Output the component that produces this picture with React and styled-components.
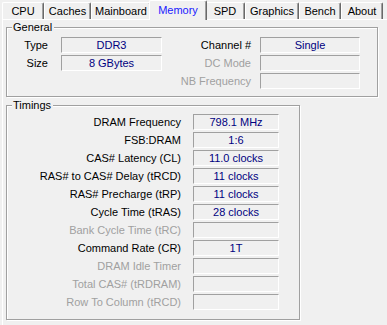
import React from "react";
import styled, { createGlobalStyle } from "styled-components";

const GlobalStyle = createGlobalStyle`
  html, body {
    margin: 0;
    padding: 0;
    background: #f0f0f0;
  }
  body {
    font-family: "Liberation Sans", Arial, sans-serif;
    font-size: 11px;
    color: #000000;
  }
`;

const Window = styled("div")`
  width: 387px;
  height: 325px;
  overflow: hidden;
  background: #f0f0f0;
`;

const TabBar = styled("div")`
  display: flex;
  align-items: flex-end;
  height: 19px;
  padding-left: 2px;
`;

const Tab = styled("div")`
  position: relative;
  box-sizing: border-box;
  width: ${(p) => (p.$active ? p.$w + 4 : p.$w)}px;
  height: ${(p) => (p.$active ? 20 : 17)}px;
  margin: ${(p) => (p.$active ? "0 -2px -1px -2px" : "0")};
  z-index: ${(p) => (p.$active ? 1 : 0)};
  display: flex;
  align-items: center;
  justify-content: center;
  padding-bottom: ${(p) => (p.$active ? 2 : 0)}px;
  background: #f0f0f0;
  border-top: 1px solid #ffffff;
  border-left: 1px solid #ffffff;
  border-right: 1px solid #696969;
  box-shadow: inset -1px 0 0 #a0a0a0;
  border-radius: 2px 2px 0 0;
  color: ${(p) => (p.$active ? "#1a1aff" : "#000000")};
  font-size: 11px;
  white-space: nowrap;
`;

const Panel = styled("div")`
  margin-left: 2px;
  width: 400px;
  height: 320px;
  box-sizing: border-box;
  border-top: 1px solid #ffffff;
  border-left: 1px solid #ffffff;
  padding: 7px 0 0 3px;
`;

const Group = styled("div")`
  position: relative;
  box-sizing: border-box;
  width: ${(p) => p.$w}px;
  border: 1px solid #a0a0a0;
  box-shadow: inset 1px 1px 0 #ffffff, 1px 1px 0 #ffffff;
  margin-bottom: 8px;
  padding: ${(p) => p.$pad};
`;

const Legend = styled("span")`
  position: absolute;
  top: -7px;
  left: 5px;
  padding: 0 2px 0 1px;
  background: #f0f0f0;
  line-height: 13px;
  color: #000000;
`;

const GeneralGrid = styled("div")`
  display: grid;
  grid-template-columns: 54px 101px 98px 100px;
  grid-auto-rows: 16px;
  row-gap: 2px;
`;

const TimingsGrid = styled("div")`
  display: grid;
  grid-template-columns: 186px 86px;
  grid-auto-rows: 16px;
  row-gap: 2px;
`;

const Label = styled("div")`
  display: flex;
  align-items: center;
  justify-content: flex-end;
  padding-right: ${(p) => p.$gap || 12}px;
  color: ${(p) => (p.$off ? "#a0a0a0" : "#000000")};
  white-space: nowrap;
`;

const Value = styled("div")`
  box-sizing: border-box;
  display: flex;
  align-items: center;
  justify-content: center;
  border-top: 1px solid #a0a0a0;
  border-left: 1px solid #a0a0a0;
  border-bottom: 1px solid #ffffff;
  border-right: 1px solid #ffffff;
  color: #000080;
  white-space: nowrap;
`;

const tabs = [
  ["CPU", 42],
  ["Caches", 47],
  ["Mainboard", 60],
  ["Memory", 54],
  ["SPD", 40],
  ["Graphics", 54],
  ["Bench", 42],
  ["About", 42],
];

const timings = [
  ["DRAM Frequency", "798.1 MHz"],
  ["FSB:DRAM", "1:6"],
  ["CAS# Latency (CL)", "11.0 clocks"],
  ["RAS# to CAS# Delay (tRCD)", "11 clocks"],
  ["RAS# Precharge (tRP)", "11 clocks"],
  ["Cycle Time (tRAS)", "28 clocks"],
  ["Bank Cycle Time (tRC)", "", true],
  ["Command Rate (CR)", "1T"],
  ["DRAM Idle Timer", "", true],
  ["Total CAS# (tRDRAM)", "", true],
  ["Row To Column (tRCD)", "", true],
];

export default function App() {
  return (
    <Window>
      <GlobalStyle />
      <TabBar>
        {tabs.map(([name, w]) => (
          <Tab key={name} $w={w} $active={name === "Memory"}>
            {name}
          </Tab>
        ))}
      </TabBar>
      <Panel>
        <Group $w={372} $pad="9px 0 7px 0">
          <Legend>General</Legend>
          <GeneralGrid>
            <Label $gap={13}>Type</Label>
            <Value>DDR3</Value>
            <Label $gap={9}>Channel #</Label>
            <Value>Single</Value>

            <Label $gap={13}>Size</Label>
            <Value>8 GBytes</Value>
            <Label $gap={9} $off>DC Mode</Label>
            <Value />

            <div />
            <div />
            <Label $gap={9} $off>NB Frequency</Label>
            <Value />
          </GeneralGrid>
        </Group>
        <Group $w={294} $pad="8px 0 9px 0">
          <Legend>Timings</Legend>
          <TimingsGrid>
            {timings.map(([label, value, off]) => (
              <React.Fragment key={label}>
                <Label $off={off}>{label}</Label>
                <Value>{value}</Value>
              </React.Fragment>
            ))}
          </TimingsGrid>
        </Group>
      </Panel>
    </Window>
  );
}
